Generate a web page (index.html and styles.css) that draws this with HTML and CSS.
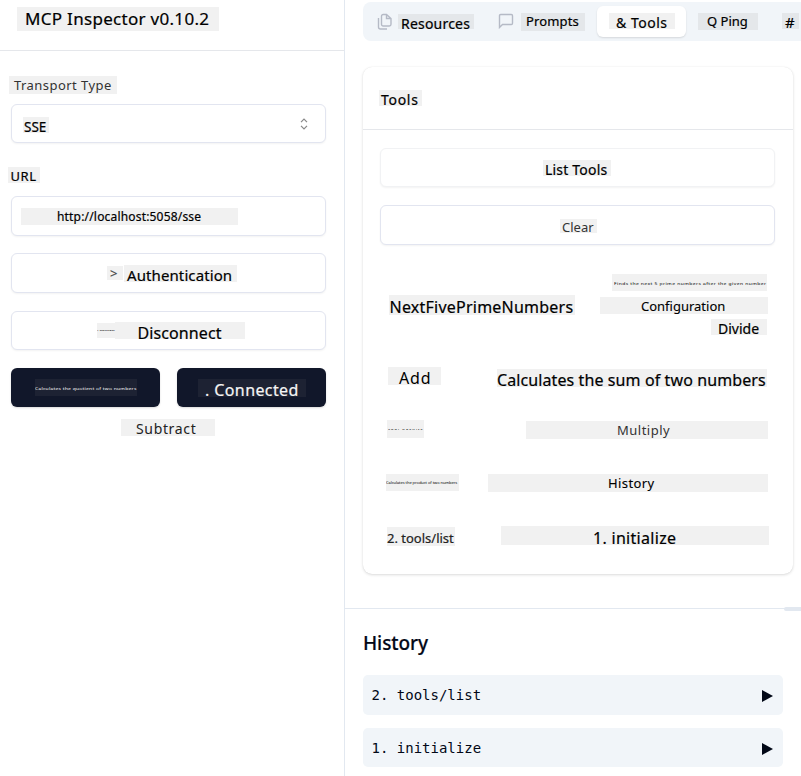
FILE: index.html
```html
<!DOCTYPE html>
<html lang="en">
<head>
<meta charset="utf-8">
<title>MCP Inspector</title>
<link rel="stylesheet" href="styles.css">
</head>
<body>
<div class="app">
  <aside class="sidebar">
    <header class="brand"><span class="chip brand-name">MCP Inspector v0.10.2</span></header>
    <div class="form">
      <span class="chip label-transport">Transport Type</span>
      <div class="box select">
        <span class="chip sse">SSE</span>
        <svg class="updown" viewBox="0 0 8 12"><path d="M1 4.2 4 1.2l3 3M1 7.8l3 3 3-3"/></svg>
      </div>
      <span class="chip label-url">URL</span>
      <div class="box input"><span class="chip url">http://localhost:5058/sse</span></div>
      <div class="box auth"><span class="chip caret">&gt;</span><span class="chip auth-text">Authentication</span></div>
      <div class="box disconnect"><span class="chip micro"><i>• Connect</i></span><span class="chip disconnect-text">Disconnect</span></div>
      <div class="actions">
        <div class="dark"><span class="chip quotient"><i>Calculates the quotient of two numbers</i></span></div>
        <div class="dark"><span class="chip connected">. Connected</span></div>
      </div>
      <span class="chip subtract">Subtract</span>
    </div>
  </aside>
  <main class="main">
    <nav class="tabs">
      <svg class="ico files" viewBox="0 0 16 18"><path d="M9.5 1.5H6.2A1.7 1.7 0 0 0 4.5 3.2v8.1A1.7 1.7 0 0 0 6.2 13h6.1a1.7 1.7 0 0 0 1.7-1.7V5.5zM9.5 1.5v4H14M1.5 5v9a2 2 0 0 0 2 2H10"/></svg>
      <span class="chip resources">Resources</span>
      <svg class="ico message" viewBox="0 0 16 16"><path d="M1.5 14.5V2.7a1.2 1.2 0 0 1 1.2-1.2h10.6a1.2 1.2 0 0 1 1.2 1.2v7.6a1.2 1.2 0 0 1-1.2 1.2H4.5z"/></svg>
      <span class="chip prompts">Prompts</span>
      <div class="tab-active"><span class="chip tools-tab">&amp; Tools</span></div>
      <span class="chip ping">Q Ping</span>
      <span class="chip hash">#</span>
    </nav>
    <section class="card">
      <header class="card-head"><span class="chip tools-title">Tools</span></header>
      <div class="card-body">
        <div class="box list"><span class="chip list-text">List Tools</span></div>
        <div class="box clear"><span class="chip clear-text">Clear</span></div>
        <div class="row row-prime">
          <span class="chip prime">NextFivePrimeNumbers</span>
          <div class="stack">
            <span class="chip prime-desc"><i>Finds the next 5 prime numbers after the given number</i></span>
            <span class="chip config">Configuration</span>
            <span class="chip divide">Divide</span>
          </div>
        </div>
        <div class="row row-add"><span class="chip add">Add</span><span class="chip sum">Calculates the sum of two numbers</span></div>
        <div class="row row-mul"><span class="chip micro-a"><i>Tool Results</i></span><span class="chip multiply">Multiply</span></div>
        <div class="row row-hist"><span class="chip micro-b"><i>Calculates the product of two numbers</i></span><span class="chip history-chip">History</span></div>
        <div class="row row-init"><span class="chip two">2. tools/list</span><span class="chip one">1. initialize</span></div>
      </div>
    </section>
    <section class="history">
      <div class="handle"></div>
      <h2>History</h2>
      <div class="entry"><span>2. tools/list</span><svg viewBox="0 0 11 12"><path d="M0 0v12L11 6z"/></svg></div>
      <div class="entry"><span>1. initialize</span><svg viewBox="0 0 11 12"><path d="M0 0v12L11 6z"/></svg></div>
    </section>
  </main>
</div>
</body>
</html>
```
FILE: styles.css
```css
* { box-sizing: border-box; }
body { margin: 0; background: #fff; color: #000; font-family: "Noto Sans", sans-serif; overflow: hidden; }
.app { display: flex; width: 801px; height: 776px; overflow: hidden; }
.sidebar { flex: none; width: 345px; border-right: 1px solid #e2e8f0; }
.main { flex: none; width: 456px; padding-top: 2px; }

.chip { display: block; flex: none; background: #f1f1f1; white-space: nowrap; text-indent: 1px; -webkit-text-stroke: .2px currentColor; }
.chip i { display: block; font-style: normal; text-indent: 0; transform-origin: 0 50%; -webkit-text-stroke: 0; }
.box { display: flex; height: 40px; border: 1px solid #e2e5f0; border-radius: 6px; background: #fff; box-shadow: 0 1px 2px rgba(0,0,0,.05); }

.brand { height: 51px; padding: 7px 0 0 17px; border-bottom: 1px solid #e5e7eb; }
.brand-name { width: 202px; height: 24px; padding-left: 7px; font-size: 17px; letter-spacing: .3px; line-height: 24px; }
.form { padding: 25px 18px 0 11px; display: flex; flex-direction: column; }
.label-transport { width: 108px; height: 18px; margin-left: -2px; padding-left: 4px; font-size: 13px; letter-spacing: .45px; line-height: 18px; color: #333; -webkit-text-stroke: 0; }
.select { height: 39px; margin-top: 10px; padding: 12px 17px 0 11px; justify-content: space-between; }
.sse { width: 26px; height: 16px; font-size: 13.5px; line-height: 20px; }
.updown { width: 8px; height: 12px; margin-top: 1px; fill: none; stroke: #888; stroke-width: 1.2; }
.label-url { width: 32px; height: 16px; margin: 24px 0 0 -3px; padding-left: 1.5px; font-size: 13px; letter-spacing: .6px; line-height: 18px; }
.input { margin-top: 13px; padding: 11px 0 0 9px; }
.url { width: 217px; height: 17px; padding-left: 35px; font-size: 12px; letter-spacing: .18px; line-height: 17px; }
.auth { margin-top: 17px; padding: 11px 0 0 95px; gap: 1px; }
.caret { width: 16px; height: 14px; margin-top: 1px; padding-left: 2px; font-size: 13px; line-height: 15px; color: #444; }
.auth-text { width: 113px; height: 17px; padding-left: 2px; font-size: 15px; letter-spacing: .1px; line-height: 20px; }
.disconnect { height: 39px; margin-top: 18px; padding: 10px 0 0 85px; }
.micro { width: 18px; height: 15px; margin-top: 1px; font-size: 4px; line-height: 15px; }
.micro i { transform: scaleY(.6); }
.disconnect-text { width: 130px; height: 17px; padding-left: 21.5px; font-size: 16px; letter-spacing: .1px; line-height: 22px; }
.actions { display: flex; gap: 17px; margin-top: 18px; }
.dark { width: 149px; height: 39px; border-radius: 6px; background: #11172a; color: #fff; box-shadow: 0 1px 2px rgba(0,0,0,.15); }
.dark .chip { background: #1d2233; }
.quotient { width: 102px; height: 17px; margin: 11px 0 0 24px; font-size: 5px; letter-spacing: .23px; line-height: 18px; }
.quotient i { transform: scaleY(.85); }
.connected { width: 108px; height: 18px; margin: 11px 0 0 21px; padding-left: 6px; font-size: 16px; letter-spacing: .4px; line-height: 22px; color: #f5f5f5; }
.subtract { width: 94px; height: 17px; margin: 12px 0 0 110px; padding-left: 14px; font-size: 14px; letter-spacing: .65px; line-height: 20px; color: #222; -webkit-text-stroke: 0; }

.tabs { display: flex; align-items: flex-start; height: 39px; margin-left: 18px; padding: 4px 0 0 14px; border-radius: 8px 0 0 8px; background: #f1f5f9; }
.tabs .chip { margin-top: 7px; background: #e4e7ea; }
.ico { flex: none; fill: none; stroke: #b5bac6; stroke-width: 1.4; }
.files { width: 16px; height: 18px; margin: 7px 4px 0 0; }
.tabs .resources { width: 76px; height: 15px; margin: 8px 24px 0 1px; padding-left: 2px; font-size: 14px; letter-spacing: .2px; line-height: 19px; }
.message { width: 16px; height: 16px; margin: 7px 7px 0 0; }
.prompts { width: 64px; height: 18px; margin-right: 12px; padding-left: 4px; font-size: 13px; letter-spacing: .15px; line-height: 17px; }
.tab-active { flex: none; width: 89px; height: 31px; margin-right: 12px; padding-left: 12px; border-radius: 6px; background: #fff; box-shadow: 0 1px 2px rgba(0,0,0,.12); }
.tabs .tools-tab { width: 66px; height: 16px; padding-left: 6px; background: #f1f1f1; font-size: 14px; letter-spacing: .5px; line-height: 20px; }
.ping { width: 60px; height: 17px; margin-right: 24px; padding-left: 8px; font-size: 13px; line-height: 17px; }
.hash { width: 17px; height: 16px; padding-left: 2px; font-size: 15px; line-height: 18px; }

.card { width: 430px; height: 507px; margin: 26px 0 0 18px; border-radius: 9px; box-shadow: 0 1px 3px rgba(0,0,0,.14), 0 0 1px rgba(0,0,0,.1); }
.card-head { height: 63px; padding: 23px 0 0 16px; border-bottom: 1px solid #e5e7eb; }
.tools-title { width: 43px; height: 16px; padding-left: 1px; font-size: 14px; letter-spacing: .7px; line-height: 20px; }
.card-body { padding: 18px 18px 0 17px; }
.list { height: 39px; padding: 11px 0 0 162px; border-color: #f1f2f4; }
.list-text { width: 68px; height: 16px; padding-left: 1px; font-size: 14px; letter-spacing: .2px; line-height: 19px; }
.clear { margin-top: 18px; padding: 13px 0 0 179px; }
.clear-text { width: 37px; height: 14px; padding-left: 1px; font-size: 13px; line-height: 16px; color: #333; -webkit-text-stroke: 0; }
.row { display: flex; align-items: flex-start; justify-content: space-between; padding: 0 7px 0 7px; }
.row-prime { margin-top: 29px; padding-left: 9px; }
.prime { width: 186px; height: 20px; margin-top: 21px; font-size: 16px; letter-spacing: .23px; line-height: 24px; text-indent: .5px; }
.stack { display: flex; flex-direction: column; align-items: flex-end; }
.prime-desc { width: 155px; height: 17px; margin-right: 1px; padding-left: 2px; font-size: 5px; letter-spacing: .41px; line-height: 18px; }
.prime-desc i { transform: scaleY(.85); }
.config { width: 168px; height: 17px; margin-top: 6px; padding-left: 40px; font-size: 13px; line-height: 18px; -webkit-text-stroke: .1px; }
.divide { width: 56px; height: 16px; margin: 5px 1px 0 0; padding-left: 6px; font-size: 14px; line-height: 19px; }
.row-add { margin-top: 32px; padding-left: 8px; padding-right: 8px; }
.add { width: 53px; height: 18px; padding-left: 10px; font-size: 16px; letter-spacing: .8px; line-height: 22px; -webkit-text-stroke: 0; }
.sum { width: 270px; height: 18px; margin-top: 2px; font-size: 16px; letter-spacing: .1px; line-height: 23px; text-indent: 0; }
.row-mul { margin-top: 33px; }
.micro-a { width: 37px; height: 18px; padding-left: 1px; font-size: 4px; letter-spacing: 1.1px; line-height: 18px; }
.micro-a i { transform: scaleY(.5); }
.multiply { width: 242px; height: 18px; margin-top: 1px; padding-left: 90px; font-size: 13px; letter-spacing: .5px; line-height: 18px; color: #333; -webkit-text-stroke: 0; }
.row-hist { margin-top: 35px; padding-left: 6px; }
.micro-b { width: 73px; height: 17px; font-size: 4px; letter-spacing: -.05px; line-height: 17px; }
.micro-b i { transform: scaleY(.7); }
.history-chip { width: 280px; height: 18px; padding-left: 119px; font-size: 13px; letter-spacing: .4px; line-height: 18px; -webkit-text-stroke: .1px; }
.row-init { margin-top: 34px; padding-right: 6px; }
.two { width: 68px; height: 19px; margin-top: 1px; font-size: 13px; line-height: 22px; color: #222; text-indent: 0; }
.one { width: 268px; height: 19px; padding-left: 91px; font-size: 16px; letter-spacing: .3px; line-height: 24px; }

.history { position: relative; margin-top: 34px; padding: 18px 18px 0; border-top: 1px solid #e2e8f0; }
.handle { position: absolute; top: -2px; right: 0; width: 17px; height: 4px; border-radius: 2px 0 0 2px; background: #e2e8f0; }
h2 { margin: 0 0 15px; font-size: 19px; font-weight: 500; letter-spacing: -.1px; line-height: 33px; color: #020817; -webkit-text-stroke: .2px; }
.entry { display: flex; align-items: center; justify-content: space-between; height: 40px; margin-bottom: 13px; padding: 0 10px 0 8.5px; border-radius: 5px; background: #f1f5f9; color: #020817; font: 14px/20px "DejaVu Sans Mono", monospace; }
.entry + .entry { height: 39px; }
.entry svg { width: 11px; height: 12px; margin-top: 2px; fill: #020817; }
```
